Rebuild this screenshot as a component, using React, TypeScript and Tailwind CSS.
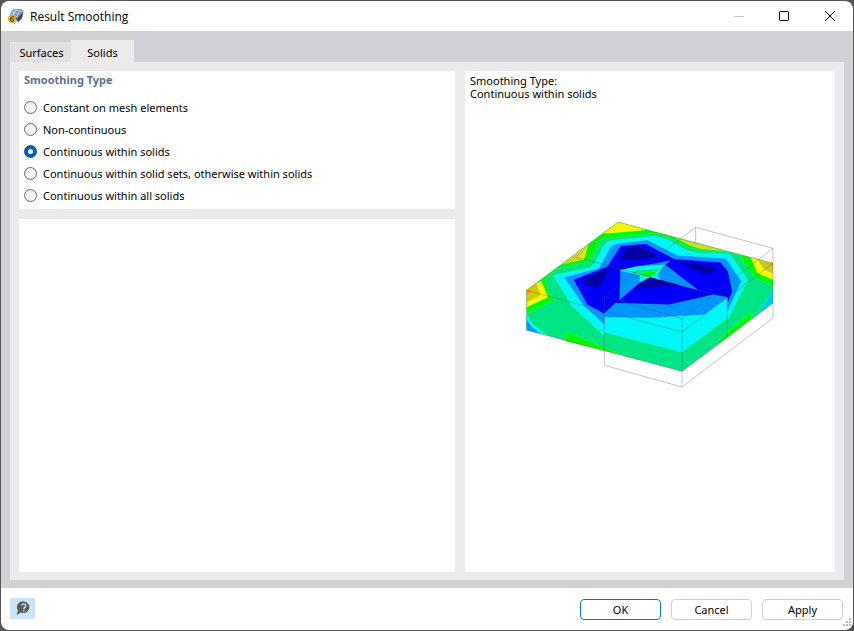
import { useState } from "react";

const smoothingTypes = [
  "Constant on mesh elements",
  "Non-continuous",
  "Continuous within solids",
  "Continuous within solid sets, otherwise within solids",
  "Continuous within all solids",
];

const regions: [string, string][] = [
  ["#00f800", "282,12 747,136 747,255 474,460 8,336 8,217"],
  // yellow and orange peaks along the outer edges
  ["#f5f500", "282,12 360,33 363,36 265,45 237,46"],
  ["#f0e800", "192,82 180,124 113,138"],
  ["#d2d21e", "148,115 180,124 113,138"],
  ["#d2d21e", "192,82 168,118 148,115"],
  ["#f8f800", "38,195 52,190 72,237 8,268 8,217"],
  ["#cdcd00", "22,205 38,195 50,232 8,253 8,217"],
  ["#ff9b00", "8,217 14,212 27,222 8,232"],
  ["#d8d820", "455,60 590,95 612,100 530,92 500,83"],
  ["#f8f800", "680,117 747,136 747,185 700,165"],
  ["#c8c81e", "700,124 747,136 747,168 718,152"],
  ["#ff9b00", "733,132 747,136 747,154"],
  // green
  ["#00e584", "63,183 100,152 187,132 200,125 228,68 240,62 390,46 440,60 500,90 545,97 615,102 650,113 655,130 695,180 747,205 747,255 474,460 8,336 8,288 98,243 78,238"],
  // cyan
  ["#00f7f7", "88,172 195,150 210,140 245,75 260,68 390,55 430,65 490,98 520,105 608,108 620,112 672,188 640,245 612,305 610,300 474,402 241,342 241,353 143,262"],
  // light blue
  ["#0096ff", "120,178 225,150 233,135 262,83 275,77 370,66 460,112 590,120 607,122 652,190 640,215 615,270 610,285 610,240 540,290 375,300 242,298 242,320 180,265"],
  // blue
  ["#0000fa", "148,185 250,145 290,83 365,77 450,122 590,133 612,160 625,220 612,255 610,238 567,230 435,260 275,255 240,287 190,260"],
  // dark blue minima
  ["#0000a0", "287,125 308,90 345,85 403,115 360,123"],
  ["#0000a0", "175,195 190,178 261,148 222,209"],
  ["#0000a0", "463,131 570,145 583,155 545,169"],
  // middle facets
  ["#0096ff", "288,157 438,128 378,178 350,172"],
  ["#0096ff", "290,157 350,171 372,178 345,195 287,245"],
  ["#0096ff", "378,178 425,142 520,215"],
  ["#00f7f7", "288,157 340,145 422,141 378,178"],
  ["#00f7f7", "348,171 378,178 347,192"],
  ["#00f7f7", "378,178 412,152 400,172 410,187"],
  ["#00e584", "310,160 414,150 378,178"],
  ["#00f800", "335,167 404,158 378,178"],
  ["#0000a0", "378,178 465,200 328,213"],
  // lower faces
  ["#00f800", "125,340 300,412 125,370"],
  ["#00f800", "575,385 583,370 607,345 660,300 680,282 683,302"],
  ["#00f7f7", "8,288 25,318 70,352 8,336"],
  ["#0096ff", "8,305 25,328 50,347 8,336"],
  ["#00c8f8", "747,220 732,240 700,290 747,255"],
];

const edges = [
  "241,235 515,28 747,91 474,302 241,235 241,442 474,507 747,300 747,91",
  "474,302 474,507",
  "515,28 515,75",
  "8,217 474,342 747,136 282,12 8,217 8,336 474,460 747,255",
  "148,115 610,240 610,356",
];

function StressModel() {
  return (
    <svg
      viewBox="0 0 756 516"
      className="mx-auto mt-[118px] block w-[252px] max-w-full"
      role="img"
      aria-label="Continuous within solids"
    >
      {regions.map(([fill, points], i) => (
        <polygon
          key={i}
          fill={fill}
          points={points}
          stroke="#d8ffff"
          strokeOpacity={i === 0 || fill === "#0000a0" ? 0 : 0.3}
          strokeWidth="1.5"
        />
      ))}
      {edges.map((points) => (
        <polyline
          key={points}
          points={points}
          fill="none"
          stroke="#50505a"
          strokeOpacity="0.5"
          strokeWidth="2"
        />
      ))}
    </svg>
  );
}

function AppIcon() {
  return (
    <svg className="size-4" viewBox="0 0 16 16" aria-hidden="true">
      <path d="M2 7 Q3 2 7 1 L14 1.5 L15.5 4 L14 10 L10 14.5 L7 10Z" fill="#53677f" />
      <path d="M2 7 Q3 2 7 1 L11 2 Q7 4 7 9Z" fill="#8ba9cb" />
      <path d="M7 9 Q7 4 11 2 L14 1.5 L15.5 4 L10 10Z" fill="#7595bb" />
      <path d="M9 10 L14.5 5 L14 10 L10 14Z" fill="#3d4b60" />
      <path d="M4 4 L12 6.5 M7 1.5 L14.5 4 M9 1.5 Q5 4 4.5 8 M13 2 Q9 5 9 10 M3 6 L10 9" fill="none" stroke="#dcebf8" strokeWidth="0.5" />
      <circle cx="4" cy="11" r="4" fill="#dbac26" />
      <path d="M6 8.7 H4 Q2.5 9 2.5 11 V12 Q2.5 13.5 4 13.5 Q5.7 13.5 5.7 12 Q5.7 10.7 4 10.7 H2.5" fill="none" stroke="#69500d" />
    </svg>
  );
}

export default function App() {
  const [selected, setSelected] = useState(2);
  const [tab, setTab] = useState("Solids");
  const button =
    "h-[21px] w-[81px] rounded-[4px] border bg-white text-[11px] leading-[19px]";

  return (
    <div className="min-h-screen bg-[#555555] p-px font-['Noto_Sans',sans-serif] text-[11px] leading-[13px] text-black">
      <main className="flex min-h-[calc(100vh-2px)] flex-col overflow-hidden rounded-lg bg-white">
        <header className="flex h-[30px] shrink-0 items-center">
          <div className="flex flex-1 items-center gap-[6px] pl-[7px]">
            <AppIcon />
            <h1 className="font-['Open_Sans',sans-serif] text-[12px]">Result Smoothing</h1>
          </div>
          <button aria-label="Minimize" disabled className="flex h-full w-[45px] items-center justify-center">
            <svg className="size-[10px]" viewBox="0 0 10 10"><path d="M0 5.5H10" stroke="#c4c4c4" /></svg>
          </button>
          <button aria-label="Maximize" className="flex h-full w-[46px] items-center justify-center">
            <svg className="size-[10px]" viewBox="0 0 10 10"><rect x=".5" y=".5" width="9" height="9" rx="1" fill="none" stroke="#000" /></svg>
          </button>
          <button aria-label="Close" className="flex h-full w-[46px] items-center justify-center">
            <svg className="size-[10px]" viewBox="0 0 10 10"><path d="M0 0L10 10M10 0L0 10" stroke="#000" /></svg>
          </button>
        </header>

        <section className="flex flex-1 flex-col bg-[#d2d1d6] px-[9px] pt-[9px] pb-2">
          <div role="tablist" className="flex items-end">
            {["Surfaces", "Solids"].map((name) => (
              <button
                key={name}
                role="tab"
                aria-selected={tab === name}
                onClick={() => setTab(name)}
                className={
                  tab === name
                    ? "h-[22px] w-[63px] bg-[#ebebeb] pt-[2px]"
                    : "h-[20px] w-[61px] bg-[#e1e1e1] pl-[2px]"
                }
              >
                {name}
              </button>
            ))}
          </div>
          <div className="grid flex-1 grid-cols-[436fr_370fr] gap-[10px] bg-[#ebebeb] px-[9px] pt-[9px] pb-2">
            <div className="flex flex-col gap-[10px]">
              <fieldset className="bg-white px-[5px] pt-[2px] pb-[3px]">
                <legend className="float-left w-full font-bold text-[#5f7093]">Smoothing Type</legend>
                <div className="clear-both flex flex-col pt-[10px]">
                  {smoothingTypes.map((type, i) => (
                    <label key={type} className="flex h-[22px] items-center gap-[6px]">
                      <input
                        type="radio"
                        name="smoothing"
                        checked={selected === i}
                        onChange={() => setSelected(i)}
                        className="size-[13px] shrink-0 appearance-none rounded-full border border-[#686868] bg-[#f5f5f5] checked:border-4 checked:border-[#005fb8] checked:bg-white"
                      />
                      {type}
                    </label>
                  ))}
                </div>
              </fieldset>
              <div className="flex-1 bg-white" />
            </div>
            <div className="bg-white px-[5px] pt-[3px]">
              <p>Smoothing Type:</p>
              <p>{smoothingTypes[selected]}</p>
              <StressModel />
            </div>
          </div>
        </section>

        <footer className="flex h-[42px] shrink-0 pt-[10px] pl-[9px]">
          <button aria-label="Help" className="flex h-[21px] w-[25px] items-center justify-center bg-[#cce4f7]">
            <svg className="h-[15px] w-[14px]" viewBox="0 0 14 15">
              <path d="M8 0.5A5.8 5.8 0 1 1 5 11.5L0.5 14L2 9.5A5.8 5.8 0 0 1 8 .5Z" fill="#5c5c5c" />
              <path d="M5.7 4.6Q6 2.9 7.9 2.9Q9.8 3 9.8 4.7Q9.8 5.7 8.7 6.4Q7.8 6.9 7.8 8M7.8 9V10.5" fill="none" stroke="#cce4f7" strokeWidth="1.4" />
            </svg>
          </button>
          <div className="ml-auto flex gap-[10px] pt-px">
            <button className={`${button} border-[#0078d4]`}>OK</button>
            <button className={`${button} border-[#d0d0d0]`}>Cancel</button>
            <button className={`${button} border-[#d0d0d0]`}>Apply</button>
          </div>
          <svg className="mb-[2px] w-[10px] self-end" viewBox="0 0 10 10" aria-hidden="true">
            <path d="M6 0h2v2h-2zM3 3h2v2h-2zM6 3h2v2h-2zM0 6h2v2h-2zM3 6h2v2h-2zM6 6h2v2h-2z" fill="#b8b8b8" />
          </svg>
        </footer>
      </main>
    </div>
  );
}
